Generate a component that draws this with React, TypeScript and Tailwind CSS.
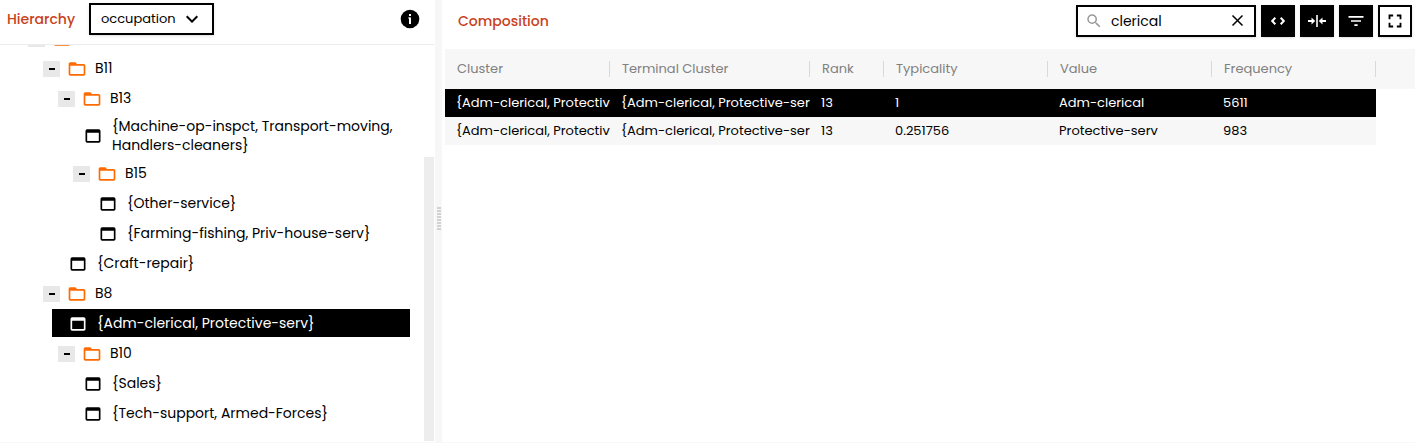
import { useState } from 'react';
import { MdExpandMore, MdFilterList, MdFolderOpen, MdFullscreen, MdSearch, MdWebAsset } from 'react-icons/md';

interface TreeNode {
  label: string;
  children?: TreeNode[];
}

interface Row {
  cluster: string;
  terminal: string;
  rank: number;
  typicality: string;
  value: string;
  frequency: number;
}

const tree: TreeNode[] = [
  {
    label: 'B7',
    children: [
      {
        label: 'B11',
        children: [
          {
            label: 'B13',
            children: [
              { label: '{Machine-op-inspct, Transport-moving, Handlers-cleaners}' },
              {
                label: 'B15',
                children: [{ label: '{Other-service}' }, { label: '{Farming-fishing, Priv-house-serv}' }],
              },
            ],
          },
          { label: '{Craft-repair}' },
        ],
      },
      {
        label: 'B8',
        children: [
          { label: '{Adm-clerical, Protective-serv}' },
          {
            label: 'B10',
            children: [{ label: '{Sales}' }, { label: '{Tech-support, Armed-Forces}' }],
          },
        ],
      },
    ],
  },
];

const columns = [
  { name: 'Cluster', width: 'w-[165px]' },
  { name: 'Terminal Cluster', width: 'w-[200px]' },
  { name: 'Rank', width: 'w-[74px]' },
  { name: 'Typicality', width: 'w-[164px]' },
  { name: 'Value', width: 'w-[164px]' },
  { name: 'Frequency', width: 'w-[164px]' },
];

const rows: Row[] = [
  {
    cluster: '{Adm-clerical, Protective-serv}',
    terminal: '{Adm-clerical, Protective-serv}',
    rank: 13,
    typicality: '1',
    value: 'Adm-clerical',
    frequency: 5611,
  },
  {
    cluster: '{Adm-clerical, Protective-serv}',
    terminal: '{Adm-clerical, Protective-serv}',
    rank: 13,
    typicality: '0.251756',
    value: 'Protective-serv',
    frequency: 983,
  },
];

function InfoIcon() {
  return (
    <svg width="20" height="20" viewBox="0 0 20 20" aria-hidden="true">
      <circle cx="10" cy="10" r="9.3" fill="#000" />
      <path d="M9 5h2v2H9zM9 8.500h2V15H9z" fill="#fff" />
      <path d="M8.200 8.500H10v1H8.200z" fill="#fff" />
    </svg>
  );
}

function CloseIcon() {
  return (
    <svg width="20" height="20" viewBox="0 0 20 20" fill="none" stroke="currentColor" strokeWidth="1.5" aria-hidden="true">
      <path d="m4.500 4.500 10 10M14.500 4.500l-10 10" />
    </svg>
  );
}

function CodeIcon() {
  return (
    <svg width="16" height="16" viewBox="0 0 16 16" fill="none" stroke="currentColor" strokeWidth="2" aria-hidden="true">
      <path d="M5.300 4.800 2.200 8l3.100 3.200M10.700 4.800 13.800 8l-3.100 3.200" />
    </svg>
  );
}

function CompressIcon() {
  return (
    <svg width="18" height="18" viewBox="0 0 18 18" fill="none" stroke="currentColor" aria-hidden="true">
      <path d="M9 3v12" strokeWidth="1.6" />
      <path d="M0 9h4M18 9h-4" strokeWidth="2" />
      <path d="M3.500 5.600 7.200 9l-3.700 3.400zM14.500 5.600 10.800 9l3.700 3.400z" fill="currentColor" stroke="none" />
    </svg>
  );
}

interface TreeItemProps {
  node: TreeNode;
  selected: string;
  onSelect: (label: string) => void;
}

function TreeItem({ node, selected, onSelect }: TreeItemProps) {
  const [open, setOpen] = useState(true);
  const active = node.label === selected;
  const rowClass = 'mb-0.5 flex min-h-7 items-center pt-[3px] pb-0.5';

  if (!node.children) {
    return (
      <li>
        <button
          type="button"
          onClick={() => onSelect(node.label)}
          className={`${rowClass} w-full pl-4 text-left ${active ? 'bg-black text-white' : ''}`}
        >
          <MdWebAsset className="mr-[9px] size-5 shrink-0" />
          <span>{node.label}</span>
        </button>
      </li>
    );
  }

  return (
    <li>
      <div className={`${rowClass} pl-1.5`}>
        <button
          type="button"
          aria-label={`Toggle ${node.label}`}
          onClick={() => setOpen(!open)}
          className="flex h-4 w-[17px] shrink-0 items-center justify-center bg-[#e8e8e8]"
        >
          <span className="h-0.5 w-1.5 bg-black" />
        </button>
        <MdFolderOpen className="mr-2 ml-[7px] size-5 shrink-0 text-[#ff6a00]" />
        <span>{node.label}</span>
      </div>
      {open && (
        <ul className="pl-[15px]">
          {node.children.map((child) => (
            <TreeItem key={child.label} node={child} selected={selected} onSelect={onSelect} />
          ))}
        </ul>
      )}
    </li>
  );
}

function HierarchyPanel() {
  const [selected, setSelected] = useState('{Adm-clerical, Protective-serv}');

  return (
    <section className="flex w-[435px] shrink-0 flex-col pr-px">
      <header className="flex h-[45px] items-center border-b border-[#ececec] pr-3.5 pb-1.5 pl-[7px]">
        <label htmlFor="variable" className="w-[82px] text-sm font-medium text-[#c7411b]">
          Hierarchy
        </label>
        <div className="relative">
          <select
            id="variable"
            className="h-8 w-[125px] appearance-none border-2 border-black bg-white pl-2.5 text-[13px] shadow-sm"
          >
            <option>occupation</option>
          </select>
          <MdExpandMore className="pointer-events-none absolute top-1 right-2.5 size-6" />
        </div>
        <button type="button" aria-label="Info" className="ml-auto">
          <InfoIcon />
        </button>
      </header>
      <div className="flex grow overflow-hidden">
        <ul className="-mt-[21px] grow pr-3.5 pl-[22px] text-sm leading-[19px]">
          {tree.map((node) => (
            <TreeItem key={node.label} node={node} selected={selected} onSelect={setSelected} />
          ))}
        </ul>
        <div className="flex w-2.5 shrink-0 pt-28">
          <div className="mb-px w-full bg-[#ededed]" />
        </div>
      </div>
    </section>
  );
}

function Splitter() {
  return (
    <div className="flex w-[7px] shrink-0 flex-col items-center justify-center gap-px bg-[#f7f7f7] pb-1.5">
      {Array.from({ length: 8 }, (_, i) => (
        <span key={i} className="h-0.5 w-1 bg-[#d2d2d2]" />
      ))}
    </div>
  );
}

function CompositionPanel() {
  const [query, setQuery] = useState('clerical');
  const toolClass = 'flex h-8 w-[34px] items-center justify-center border-2 border-black shadow-sm';

  return (
    <section className="min-w-0 grow pl-[3px]">
      <header className="flex h-[49px] items-center gap-[5px] pr-[3px] pb-[7px] pl-[13px]">
        <h2 className="mr-auto text-sm font-medium text-[#c7411b]">Composition</h2>
        <div className="flex h-8 w-[180px] items-center border-2 border-black pr-1.5 pl-[7px] shadow-sm">
          <MdSearch className="size-[18px] shrink-0 text-[#999]" />
          <input
            aria-label="Search"
            value={query}
            onChange={(e) => setQuery(e.target.value)}
            className="ml-2 w-0 grow text-sm outline-none"
          />
          <button type="button" aria-label="Clear" onClick={() => setQuery('')}>
            <CloseIcon />
          </button>
        </div>
        <button type="button" aria-label="Code" className={`${toolClass} bg-black text-white`}>
          <CodeIcon />
        </button>
        <button type="button" aria-label="Fit columns" className={`${toolClass} bg-black text-white`}>
          <CompressIcon />
        </button>
        <button type="button" aria-label="Filter" className={`${toolClass} bg-black text-white`}>
          <MdFilterList className="size-5" />
        </button>
        <button type="button" aria-label="Full screen" className={`${toolClass} bg-white`}>
          <MdFullscreen className="size-[22px]" />
        </button>
      </header>
      <table className="w-full table-fixed border-collapse text-left text-[13px] whitespace-nowrap">
        <thead>
          <tr className="h-10 bg-[#f7f7f7] text-[#808080]">
            {columns.map((col) => (
              <th key={col.name} className={`${col.width} p-0 font-normal`}>
                <div className="h-4 border-r border-[#d9d9d9] pl-3 leading-4">{col.name}</div>
              </th>
            ))}
            <td />
          </tr>
        </thead>
        <tbody>
          {rows.map((row, i) => {
            const rowStyle = i === 0 ? 'bg-black text-white' : 'bg-[#f7f7f7]';
            return (
              <tr key={row.value} className="h-7">
                {Object.entries(row).map(([key, cell]) => (
                  <td key={key} className={`${rowStyle} overflow-hidden p-0 pl-[11px]`}>
                    <div className="overflow-hidden">{cell}</div>
                  </td>
                ))}
              </tr>
            );
          })}
        </tbody>
      </table>
    </section>
  );
}

export default function App() {
  return (
    <main className="flex min-h-screen border-b border-[#f7f7f7] bg-white font-['Poppins','Inter',sans-serif] text-black">
      <HierarchyPanel />
      <Splitter />
      <CompositionPanel />
    </main>
  );
}
